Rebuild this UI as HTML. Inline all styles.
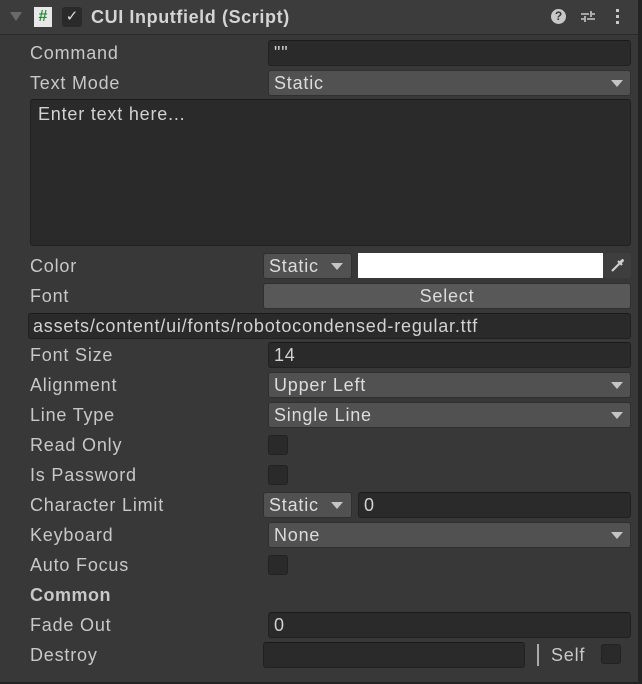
<!DOCTYPE html><html><head><style>
body{margin:0;width:642px;height:684px;background:#383838;font-family:"Liberation Sans",sans-serif;color:#c8c8c8;font-size:18px;letter-spacing:0.8px;position:relative;overflow:hidden}
.a{position:absolute}
.lbl{position:absolute;left:30px;line-height:20px}
.tf{position:absolute;background:#2a2a2a;border:1px solid #212121;border-top-color:#1a1a1a;border-radius:3px;box-sizing:border-box;line-height:25px;padding-left:5px;color:#d2d2d2}
.dd{position:absolute;background:#515151;border:1px solid #303030;border-radius:3px;box-sizing:border-box;line-height:25px;padding-left:5px;color:#dcdcdc}
.arr{position:absolute;right:7px;top:9px;width:0;height:0;border-left:6px solid transparent;border-right:6px solid transparent;border-top:7px solid #c4c4c4}
.cb{position:absolute;width:20px;height:20px;background:#2a2a2a;border:1px solid #222;border-radius:3px;box-sizing:border-box}
</style></head><body>
<div class="a" style="left:0;top:0;width:642px;height:34px;background:#3c3c3c;border-bottom:1px solid #2a2a2a"></div>
<div class="a" style="left:10px;top:12px;border-left:6px solid transparent;border-right:6px solid transparent;border-top:9px solid #6a6a6a"></div>
<div class="a" style="left:34px;top:7px;width:18px;height:20px;background:#e8e8e8;color:#2a8a3a;font-weight:bold;font-size:16px;text-align:center;line-height:20px;letter-spacing:0">#</div>
<div class="a" style="left:62px;top:7px;width:20px;height:20px;background:#2a2a2a;border-radius:3px;color:#ddd;text-align:center;line-height:20px;font-size:15px;letter-spacing:0">✓</div>
<div class="a" style="left:91px;top:6px;font-weight:bold;color:#d4d4d4;font-size:18px;line-height:22px;letter-spacing:0.6px">CUI Inputfield (Script)</div>
<div class="a" style="left:551px;top:9px;width:15px;height:15px;border-radius:50%;background:#c8c8c8;color:#383838;font-size:12px;font-weight:bold;text-align:center;line-height:15px;letter-spacing:0">?</div>
<svg class="a" style="left:580px;top:8px" width="16" height="16"><path d="M1 6h8M12 6h3M11 3v6M1 11h3M7 11h8M5 8v6" stroke="#c8c8c8" stroke-width="1.6" fill="none"/></svg>
<div class="a" style="left:616px;top:9px;width:3px;height:3px;background:#c8c8c8;box-shadow:0 6px #c8c8c8,0 12px #c8c8c8"></div>
<div class="a" style="left:638px;top:0;width:4px;height:684px;background:#232323"></div>
<div class="a" style="left:0;top:682px;width:642px;height:2px;background:#232323"></div>

<div class="lbl" style="top:43px">Command</div><div class="tf" style="left:268px;top:40px;width:363px;height:26px">""</div>
<div class="lbl" style="top:73px">Text Mode</div><div class="dd" style="left:268px;top:70px;width:363px;height:26px">Static<div class="arr"></div></div>
<div class="tf" style="left:30px;top:99px;width:601px;height:147px;padding-left:7px;line-height:28px">Enter text here...</div>
<div class="lbl" style="top:256px">Color</div><div class="dd" style="left:263px;top:253px;width:89px;height:26px">Static<div class="arr" style="right:8px"></div></div>
<div class="a" style="left:358px;top:253px;width:245px;height:25px;background:#fff"></div>
<div class="a" style="left:603px;top:253px;width:28px;height:25px;background:#3e3e3e;border-radius:3px"></div>
<svg class="a" style="left:609px;top:256px" width="18" height="18"><path d="M3 15l8-8M11 7l-2-2M11 7l2 2" stroke="#d0d0d0" stroke-width="2.2" fill="none"/><path d="M10 6l3-3a2 2 0 0 1 2 2l-3 3z" fill="#d0d0d0"/></svg>
<div class="lbl" style="top:286px">Font</div><div class="dd" style="left:263px;top:283px;width:368px;height:26px;text-align:center;padding:0;background:#585858">Select</div>
<div class="tf" style="left:28px;top:313px;width:603px;height:26px;padding-left:4px">assets/content/ui/fonts/robotocondensed-regular.ttf</div>
<div class="lbl" style="top:345px">Font Size</div><div class="tf" style="left:268px;top:342px;width:363px;height:26px">14</div>
<div class="lbl" style="top:375px">Alignment</div><div class="dd" style="left:268px;top:372px;width:363px;height:26px">Upper Left<div class="arr"></div></div>
<div class="lbl" style="top:405px">Line Type</div><div class="dd" style="left:268px;top:402px;width:363px;height:26px">Single Line<div class="arr"></div></div>
<div class="lbl" style="top:435px">Read Only</div><div class="cb" style="left:268px;top:435px"></div>
<div class="lbl" style="top:465px">Is Password</div><div class="cb" style="left:268px;top:465px"></div>
<div class="lbl" style="top:495px">Character Limit</div><div class="dd" style="left:263px;top:492px;width:89px;height:26px">Static<div class="arr" style="right:8px"></div></div><div class="tf" style="left:358px;top:492px;width:273px;height:26px">0</div>
<div class="lbl" style="top:525px">Keyboard</div><div class="dd" style="left:268px;top:522px;width:363px;height:26px">None<div class="arr"></div></div>
<div class="lbl" style="top:555px">Auto Focus</div><div class="cb" style="left:268px;top:555px"></div>
<div class="lbl" style="top:585px;font-weight:bold;letter-spacing:0.5px">Common</div>
<div class="lbl" style="top:615px">Fade Out</div><div class="tf" style="left:268px;top:612px;width:363px;height:26px">0</div>
<div class="lbl" style="top:645px">Destroy</div><div class="tf" style="left:263px;top:642px;width:262px;height:26px"></div>
<div class="a" style="left:537px;top:644px;width:2px;height:22px;background:#aaa"></div>
<div class="a" style="left:551px;top:645px;line-height:20px">Self</div><div class="cb" style="left:601px;top:644px"></div>
</body></html>
